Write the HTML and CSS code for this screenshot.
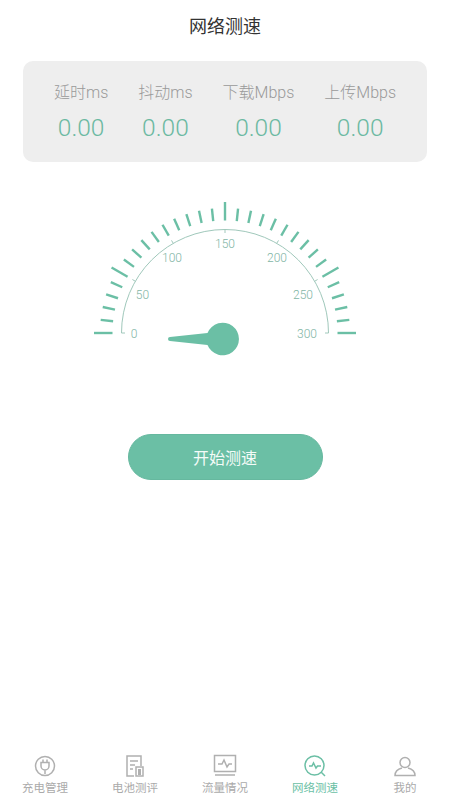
FILE: index.html
```html
<!DOCTYPE html>
<html lang="zh-CN">
<head>
<meta charset="utf-8">
<title>网络测速</title>
<link rel="stylesheet" href="styles.css">
</head>
<body>
<div class="app">
  <header class="title">网络测速</header>
  <section class="stats">
    <div class="stat"><div class="stat-label">延时ms</div><div class="stat-value">0.00</div></div>
    <div class="stat"><div class="stat-label">抖动ms</div><div class="stat-value">0.00</div></div>
    <div class="stat"><div class="stat-label">下载Mbps</div><div class="stat-value">0.00</div></div>
    <div class="stat"><div class="stat-label">上传Mbps</div><div class="stat-value">0.00</div></div>
  </section>
  <section class="gauge-wrap">
    <svg class="gauge" id="gauge" width="270" height="170" viewBox="-135 -135 270 170">
      <g id="ticks"></g>
      <path class="arc" d="M-100 0H-103.5A103.5 103.5 0 0 1 103.5 0H100"/>
      <path class="arc" d="M-89.6 -51.7L-92.6 -53.5M-51.7 -89.6L-53.5 -92.6M0 -100V-103.5M51.7 -89.6L53.5 -92.6M89.6 -51.7L92.6 -53.5"/>
      <g class="gauge-labels">
        <text x="-91" y="4.5">0</text>
        <text x="-82.5" y="-34">50</text>
        <text x="-53" y="-71">100</text>
        <text x="0" y="-85">150</text>
        <text x="52" y="-71">200</text>
        <text x="78" y="-34">250</text>
        <text x="82" y="4.5">300</text>
      </g>
      <path class="needle" d="M-55 4L-17.5 0A16.3 16.3 0 1 1 -17.5 12L-55 8A2 2 0 0 1 -55 4Z"/>
    </svg>
  </section>
  <button class="start">开始测速</button>
  <nav class="tabs">
    <div class="tab">
      <svg width="24" height="24" viewBox="0 0 24 24" class="ico"><circle cx="12" cy="12" r="9.5"/><path d="M8 8.5v3.5a4 4 0 0 0 8 0V8.5zM10 8.5V5.5M14 8.5V5.5M12 16v4"/></svg>
      <span>充电管理</span>
    </div>
    <div class="tab">
      <svg width="24" height="24" viewBox="0 0 24 24" class="ico"><path d="M11 22H4V2h14v10M7 7h8M7 11h5M7 15h3"/><rect x="13" y="13" width="7" height="9"/><rect class="fill" x="15" y="15" width="3" height="6"/></svg>
      <span>电池测评</span>
    </div>
    <div class="tab">
      <svg width="24" height="24" viewBox="0 0 24 24" class="ico"><path d="M1.5 1.5h21v16h-21zM2 21h20M5 10h4l2-4 3 7 2-3h3"/></svg>
      <span>流量情况</span>
    </div>
    <div class="tab active">
      <svg width="24" height="24" viewBox="0 0 24 24" class="ico"><circle cx="11.5" cy="11.5" r="9.5"/><path d="M18 18l4 4M6 12h3l1.5-3 2.5 5 1.5-2H18"/></svg>
      <span>网络测速</span>
    </div>
    <div class="tab">
      <svg width="24" height="24" viewBox="0 0 24 24" class="ico"><circle cx="12" cy="8.5" r="5"/><path d="M9 14C5 15 2 17 2 21.5H22C22 17 19 15 15 14"/></svg>
      <span>我的</span>
    </div>
  </nav>
</div>
<script src="gauge.js"></script>
</body>
</html>
```
FILE: gauge.js
```js
var g = document.getElementById('ticks');
var out = '';
for (var i = 0; i <= 30; i++) {
  var a = Math.PI * i / 30;
  var major = i === 0 || i === 5 || i === 15 || i === 25 || i === 30;
  var r1 = 112.5, r2 = major ? 131 : 125;
  var c = Math.cos(a), s = Math.sin(a);
  out += '<line x1="' + (-r1 * c).toFixed(2) + '" y1="' + (-r1 * s).toFixed(2) +
         '" x2="' + (-r2 * c).toFixed(2) + '" y2="' + (-r2 * s).toFixed(2) + '"/>';
}
g.innerHTML = out;
```
FILE: styles.css
```css
* { box-sizing: border-box; }
html, body { margin: 0; padding: 0; background: #fff; }
body { font-family: "Roboto", "Noto Sans CJK SC", sans-serif; }
.app { width: 450px; height: 800px; display: flex; flex-direction: column; align-items: center; }
.title { height: 61px; padding-top: 15px; font-size: 18px; line-height: 24px; color: #333; }
.stats { width: 404px; height: 101px; background: #eee; border-radius: 10px; display: flex; justify-content: center; gap: 30px; padding-top: 21px; }
.stat { display: flex; flex-direction: column; align-items: center; }
.stat-label { font-size: 16px; line-height: 22px; color: #999; font-weight: 300; }
.stat-value { font-size: 24.5px; line-height: 30px; margin-top: 9px; color: #6bb9a1; font-weight: 300; }
.gauge-wrap { margin-top: 36px; height: 170px; }
.gauge { display: block; }
#ticks line { stroke: #6bbfa5; stroke-width: 2.4; }
.arc { fill: none; stroke: #a0c8bb; stroke-width: 1; }
.gauge-labels text { font-size: 12px; fill: #7fb5a5; text-anchor: middle; font-weight: 300; }
.needle { fill: #6bbfa5; }
.start { margin-top: 66px; width: 195px; height: 46px; border-radius: 23px; background: #6bbfa5; border: 1px solid #66b89f; color: #f4fbf8; font-family: inherit; font-size: 16px; padding: 0; }
.tabs { margin-top: auto; width: 100%; height: 48px; padding-top: 2px; display: grid; grid-template-columns: repeat(5, 1fr); }
.tab { display: flex; flex-direction: column; align-items: center; font-size: 11.5px; line-height: 14px; color: #aaa; }
.tab span { margin-top: 3px; }
.ico { display: block; fill: none; stroke: #b0b0b0; stroke-width: 1.5; }
.ico .fill { fill: #b0b0b0; stroke: none; }
.tab.active { color: #6bbfa5; }
.tab.active .ico { stroke: #6bbfa5; }
```
